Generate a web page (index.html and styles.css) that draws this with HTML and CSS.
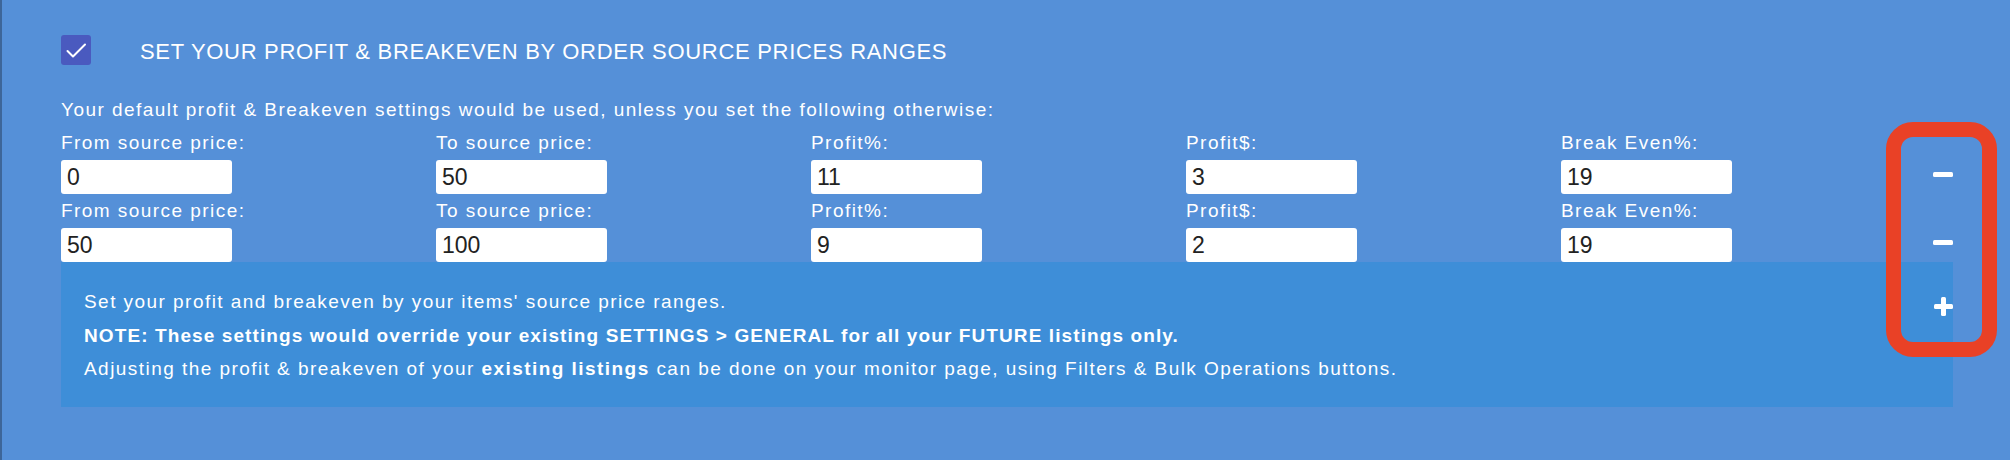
FILE: index.html
```html
<!DOCTYPE html>
<html lang="en">
<head>
  <meta charset="UTF-8">
  <title>Price Range Settings</title>
  <link rel="stylesheet" href="styles.css">
</head>
<body>
  <div class="panel">
    <div class="panel-head">
      <span class="check">
        <svg width="30" height="30" viewBox="0 0 30 30"><polyline points="6.5,16 12,21.5 24,9.5" fill="none" stroke="#fff" stroke-width="2" stroke-linecap="round" stroke-linejoin="round"/></svg>
      </span>
      <h2 class="panel-title">SET YOUR PROFIT &amp; BREAKEVEN BY ORDER SOURCE PRICES RANGES</h2>
    </div>

    <p class="intro">Your default profit &amp; Breakeven settings would be used, unless you set the following otherwise:</p>

    <div class="range-row">
      <div class="field"><label>From source price:</label><input type="text" value="0"></div>
      <div class="field"><label>To source price:</label><input type="text" value="50"></div>
      <div class="field"><label>Profit%:</label><input type="text" value="11"></div>
      <div class="field"><label>Profit$:</label><input type="text" value="3"></div>
      <div class="field"><label>Break Even%:</label><input type="text" value="19"></div>
      <button class="row-btn minus"><svg width="20" height="5" viewBox="0 0 20 5"><rect width="20" height="5" rx="1.5" fill="#fff"/></svg></button>
    </div>

    <div class="range-row">
      <div class="field"><label>From source price:</label><input type="text" value="50"></div>
      <div class="field"><label>To source price:</label><input type="text" value="100"></div>
      <div class="field"><label>Profit%:</label><input type="text" value="9"></div>
      <div class="field"><label>Profit$:</label><input type="text" value="2"></div>
      <div class="field"><label>Break Even%:</label><input type="text" value="19"></div>
      <button class="row-btn minus"><svg width="20" height="5" viewBox="0 0 20 5"><rect width="20" height="5" rx="1.5" fill="#fff"/></svg></button>
    </div>

    <div class="info">
      <div class="info-text">
        <p>Set your profit and breakeven by your items' source price ranges.</p>
        <p class="note"><b>NOTE: These settings would override your existing SETTINGS &gt; GENERAL for all your FUTURE listings only.</b></p>
        <p>Adjusting the profit &amp; breakeven of your <b>existing listings</b> can be done on your monitor page, using Filters &amp; Bulk Operations buttons.</p>
      </div>
      <button class="row-btn plus"><svg width="19" height="19" viewBox="0 0 19 19"><rect x="7" y="0" width="5" height="19" rx="1.5" fill="#fff"/><rect x="0" y="7" width="19" height="5" rx="1.5" fill="#fff"/></svg></button>
    </div>

    <!-- highlight around the add/remove buttons -->
    <div class="highlight"></div>
  </div>
</body>
</html>
```

FILE: styles.css
```css
html, body {
  margin: 0;
  background-color: #5590d8;
}
body {
  font-family: "Liberation Sans", Arial, sans-serif;
  color: #fff;
}
.panel {
  position: relative;
  height: 460px;
  box-sizing: border-box;
  border-left: 2px solid #3d6699;
  padding: 35px 57px 0 59px;
}
.panel-head {
  display: flex;
  align-items: flex-start;
}
.check {
  width: 30px;
  height: 30px;
  border-radius: 3px;
  background-color: #4a5abf;
  display: flex;
}
.panel-title {
  margin: 0 0 0 49px;
  font-size: 22px;
  font-weight: normal;
  line-height: 34px;
  letter-spacing: 0.7px;
}
.intro {
  margin: 24px 0 0;
  font-size: 19px;
  line-height: 33px;
  letter-spacing: 1.45px;
}
.range-row {
  display: grid;
  grid-template-columns: 375px 375px 375px 375px 1fr auto;
  align-items: end;
}
.field label {
  display: block;
  font-size: 19px;
  line-height: 34px;
  letter-spacing: 1.45px;
}
.field input {
  display: block;
  width: 171px;
  height: 34px;
  box-sizing: border-box;
  border: none;
  border-radius: 3px;
  padding: 0 6px;
  font-family: "Liberation Sans", Arial, sans-serif;
  font-size: 23px;
  color: #222;
  background: #fff;
  outline: none;
}
.row-btn {
  border: none;
  background: none;
  padding: 0;
  display: flex;
  align-items: center;
  justify-content: center;
  cursor: pointer;
}
.row-btn.minus {
  width: 20px;
  height: 34px;
  margin-bottom: 3px;
}
.info {
  display: flex;
  background-color: #3e8ed8;
  padding: 23px 0 21px 23px;
}
.info-text {
  flex: 1;
}
.info-text p {
  margin: 0;
  font-size: 19px;
  line-height: 33.5px;
  letter-spacing: 1.45px;
}
.info-text .note {
  letter-spacing: 1.1px;
}
.row-btn.plus {
  width: 19px;
  height: 19px;
  margin-top: 12px;
}
.highlight {
  position: absolute;
  left: 1884px;
  top: 122px;
  width: 111px;
  height: 235px;
  box-sizing: border-box;
  border: 15px solid #e94126;
  border-radius: 27px;
}
```
